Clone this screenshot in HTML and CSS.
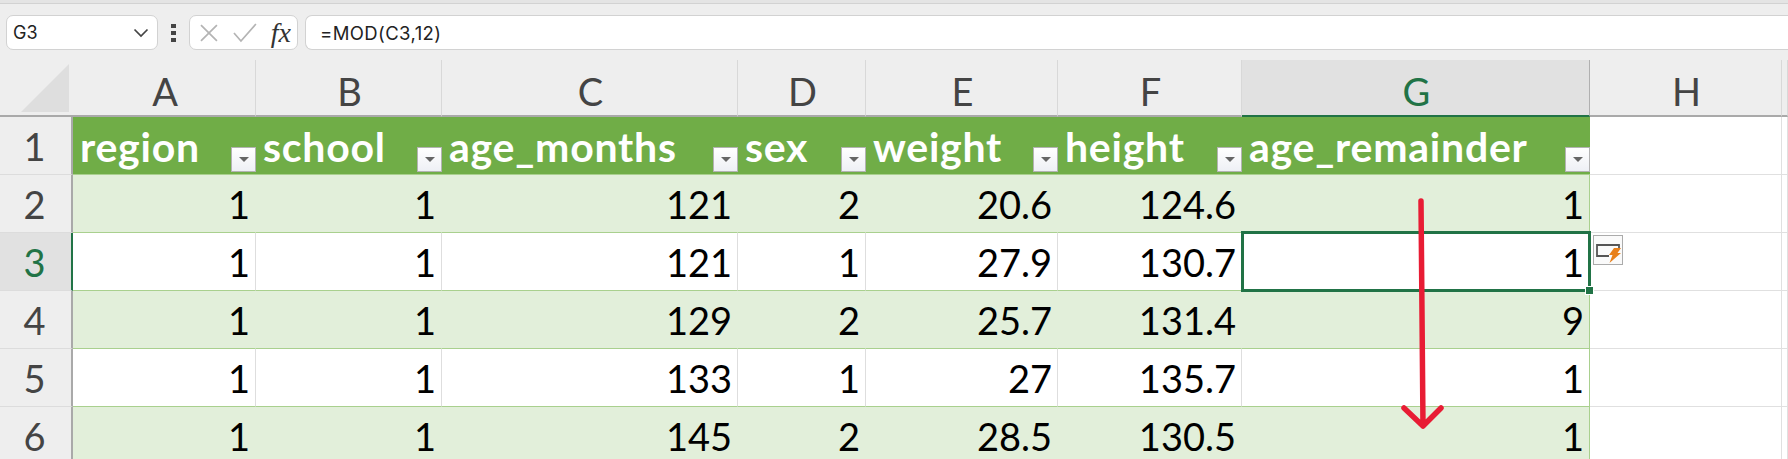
FILE: index.html
```html
<!DOCTYPE html>
<html lang="en">
<head>
<meta charset="utf-8">
<title>Excel MOD formula</title>
<link rel="stylesheet" href="styles.css">
</head>
<body>
<div class="toolbar">
  <div class="field namebox"><span class="name">G3</span>
    <svg class="chev" width="16" height="10" viewBox="0 0 16 10"><path d="M1.5 1.5 8 8l6.5-6.5" fill="none" stroke="#444" stroke-width="1.7"/></svg>
  </div>
  <div class="dots"><i></i><i></i><i></i></div>
  <div class="field fxbox">
    <svg width="20" height="20" viewBox="0 0 20 20"><path d="M2 2l16 16M18 2 2 18" fill="none" stroke="#b4b4b4" stroke-width="1.7"/></svg>
    <svg width="26" height="20" viewBox="0 0 26 20"><path d="M2 10l7 8L24 1" fill="none" stroke="#b4b4b4" stroke-width="1.7"/></svg>
    <span class="fx">fx</span>
  </div>
  <div class="field formula">=MOD(C3,12)</div>
</div>

<div class="sheet">
  <div class="row head">
    <div class="corner"><svg width="50" height="50" viewBox="0 0 50 50"><path d="M1 49 49 1v48z" fill="#dedede"/></svg></div>
    <div class="col">A</div><div class="col">B</div><div class="col">C</div><div class="col">D</div><div class="col">E</div><div class="col">F</div><div class="col sel">G</div><div class="col">H</div><div class="col"></div>
  </div>

  <div class="row">
    <div class="rh">1</div>
    <div class="th"><span>region</span><b class="filter"></b></div>
    <div class="th"><span>school</span><b class="filter"></b></div>
    <div class="th"><span>age_months</span><b class="filter"></b></div>
    <div class="th"><span>sex</span><b class="filter"></b></div>
    <div class="th"><span>weight</span><b class="filter"></b></div>
    <div class="th"><span>height</span><b class="filter"></b></div>
    <div class="th"><span>age_remainder</span><b class="filter"></b></div>
    <div class="td out"></div><div class="td out"></div>
  </div>

  <div class="row band">
    <div class="rh">2</div>
    <div class="td">1</div><div class="td">1</div><div class="td">121</div><div class="td">2</div><div class="td">20.6</div><div class="td">124.6</div><div class="td last">1</div>
    <div class="td out"></div><div class="td out"></div>
  </div>

  <div class="row">
    <div class="rh sel">3</div>
    <div class="td">1</div><div class="td">1</div><div class="td">121</div><div class="td">1</div><div class="td">27.9</div><div class="td">130.7</div>
    <div class="td last active">1<i class="handle"></i>
      <div class="smart"><svg width="28" height="28" viewBox="0 0 28 28"><path d="M25 12V9H3v11h12" fill="none" stroke="#555" stroke-width="1.8"/><path d="M20 12h7l-3.5 5H27L15.500 27l3-8H15z" fill="#e8801a"/></svg></div>
    </div>
    <div class="td out"></div><div class="td out"></div>
  </div>

  <div class="row band">
    <div class="rh">4</div>
    <div class="td">1</div><div class="td">1</div><div class="td">129</div><div class="td">2</div><div class="td">25.7</div><div class="td">131.4</div><div class="td last">9</div>
    <div class="td out"></div><div class="td out"></div>
  </div>

  <div class="row">
    <div class="rh">5</div>
    <div class="td">1</div><div class="td">1</div><div class="td">133</div><div class="td">1</div><div class="td">27</div><div class="td">135.7</div><div class="td last">1</div>
    <div class="td out"></div><div class="td out"></div>
  </div>

  <div class="row band">
    <div class="rh">6</div>
    <div class="td">1</div><div class="td">1</div><div class="td">145</div><div class="td">2</div><div class="td">28.5</div><div class="td">130.5</div><div class="td last">1</div>
    <div class="td out"></div><div class="td out"></div>
  </div>

  <svg class="arrow" width="50" height="240" viewBox="0 0 50 240"><path d="M24 3l2 225M7 210l19 18 18-18" fill="none" stroke="#e81c34" stroke-width="5.5" stroke-linecap="round" stroke-linejoin="round"/></svg>
</div>
</body>
</html>
```
FILE: styles.css
```css
* { box-sizing: border-box; }
html, body { margin: 0; height: 459px; overflow: hidden; background: #fff; }
body { font-family: "Lato", "Liberation Sans", sans-serif; }

.toolbar {
  height: 60px;
  background: #eeeeee;
  border-top: 3px solid #e4e4e4;
  display: flex;
  align-items: flex-start;
  padding: 12px 0 0 6px;
  box-shadow: inset 0 1px 0 #d2d2d2;
}
.field {
  height: 35px;
  background: #fff;
  border: 1px solid #d2d2d2;
  border-radius: 7px;
  display: flex;
  align-items: center;
  font-family: "Inter", "Liberation Sans", sans-serif;
  font-size: 18px;
  color: #222;
}
.namebox { width: 152px; padding: 0 8px 0 6px; justify-content: space-between; }
.dots { width: 31px; height: 35px; display: flex; flex-direction: column; justify-content: center; align-items: center; gap: 3px; }
.dots i { width: 5px; height: 4px; background: #444; }
.fxbox { width: 109px; padding: 0 6px 0 9px; gap: 13px; }
.fx { font-family: "Liberation Serif", serif; font-style: italic; font-size: 28px; color: #333; line-height: 1; }
.formula { flex: 1; margin-left: 7px; padding-left: 14px; border-right: 0; border-radius: 7px 0 0 7px; font-size: 18.5px; letter-spacing: 0.4px; }

.sheet { position: relative; }
.row {
  display: grid;
  grid-template-columns: 73px 183px 186px 296px 128px 192px 184px 348px 192px 6px;
  height: 58px;
}
.row.head { height: 57px; }
.head { background: #eeeeee; }
.corner { padding: 3px 0 0 20px; border-bottom: 2px solid #a9a9a9; }
.corner svg { display: block; }
.col {
  display: flex; align-items: center; justify-content: center;
  font-size: 38px; color: #444;
  padding: 6px 0 0 2px;
  border-right: 1px solid #d8d8d8;
  border-bottom: 2px solid #a9a9a9;
}
.col.sel { background: #e1e1e1; color: #217346; border-bottom: 2px solid #217346; border-right-color: #b0b0b0; }
.rh {
  display: flex; align-items: center; justify-content: center;
  background: #eeeeee; color: #444; font-size: 38px;
  padding-right: 2px;
  border-right: 2px solid #a9a9a9;
  border-bottom: 1px solid #dcdcdc;
}
.rh.sel { background: #e1e1e1; color: #217346; border-right-color: #217346; }

.th {
  background: #70ad47; color: #fff; font-weight: 700; font-size: 41px; letter-spacing: 0.75px;
  display: flex; justify-content: space-between; align-items: flex-end;
  padding: 0 0 1px 7px;
  border-bottom: 1px solid #a9d08e;
}
.th span { align-self: center; line-height: 1; padding-top: 2px; }
.filter {
  width: 25px; height: 25px; flex: none;
  background: linear-gradient(#ffffff, #eef0f5);
  border: 1px solid #b3b3b3;
  margin-bottom: 1px;
  display: flex; align-items: center; justify-content: center;
}
.filter::after {
  content: ""; width: 0; height: 0;
  border-left: 5px solid transparent; border-right: 5px solid transparent;
  border-top: 5px solid #666;
}
.td {
  display: flex; align-items: center; justify-content: flex-end;
  font-size: 38px; color: #000;
  padding-right: 5px;
  border-right: 1px solid #dedede;
  border-bottom: 1px solid #a9d08e;
}
.band .td { background: #e2efda; border-right-color: #e2efda; }
.td.last, .band .td.last { border-right: 1px solid #a9d08e; }
.td.out, .band .td.out { background: #fff; border-right: 1px solid #e0e0e0; border-bottom: 1px solid #e0e0e0; }

.active { position: relative; }
.active::before {
  content: ""; position: absolute;
  left: -1px; top: -2px; right: -2px; bottom: -2px;
  border: 3px solid #217346;
}
.handle {
  position: absolute; right: -4px; bottom: -4px;
  width: 7px; height: 7px; background: #217346; outline: 1px solid #fff;
}
.smart {
  position: absolute; left: calc(100% + 4px); top: 2px;
  width: 30px; height: 30px;
  background: #fafafa; border: 1px solid #ababab;
}
.smart svg { display: block; }
.arrow { position: absolute; left: 1397px; top: 138px; pointer-events: none; }
```
